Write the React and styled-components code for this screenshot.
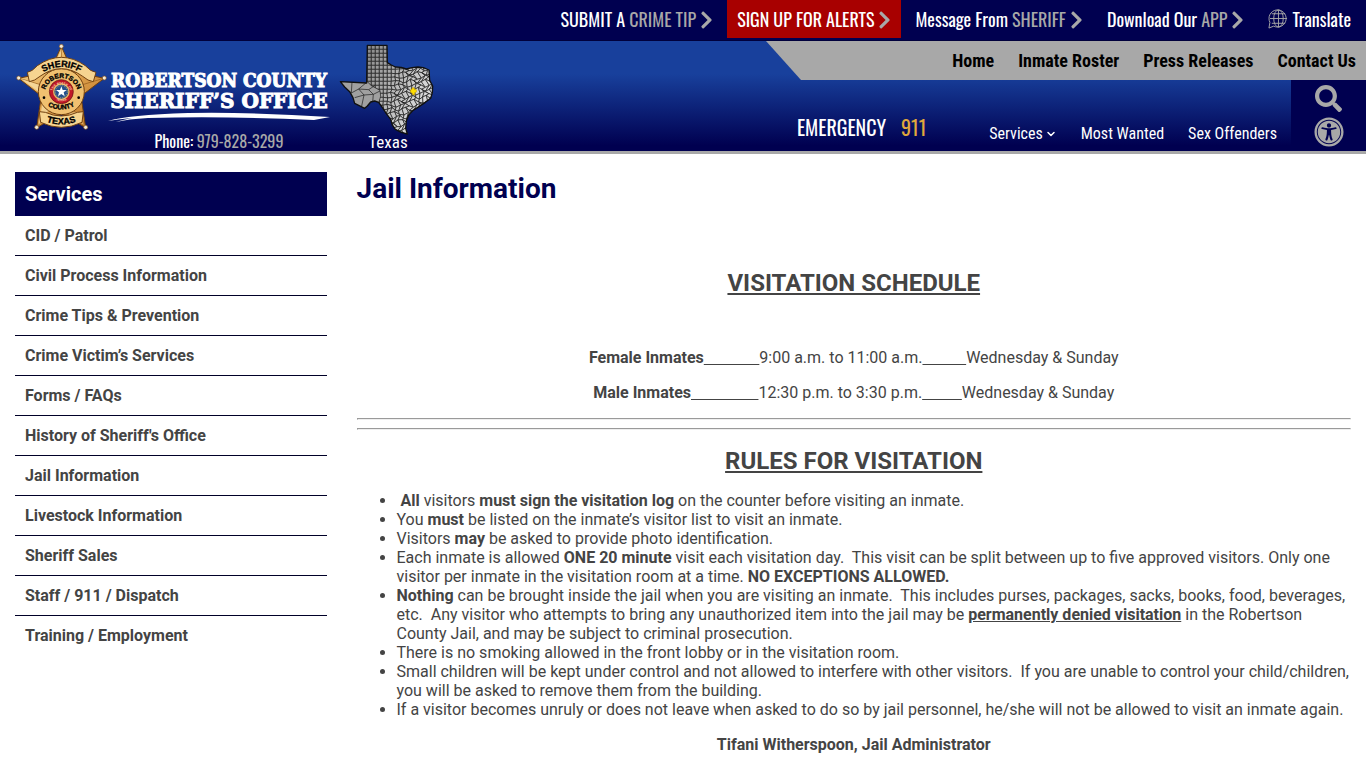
import React from "react";
import styled, { createGlobalStyle } from "styled-components";
import { FaChevronRight, FaSearch, FaUniversalAccess } from "react-icons/fa";
import { ChevronDown } from "lucide-react";

const NAVY = "#000050";
const SILVER = "#a8a8a8";
const INK = "#444";

const GlobalStyle = createGlobalStyle`
  *, *::before, *::after { box-sizing: border-box; }
  body {
    margin: 0;
    background: #fff;
    color: ${INK};
    font: 16px/19px Roboto, "Liberation Sans", sans-serif;
  }
  a { color: inherit; text-decoration: none; }
`;

/* ---------- top bar ---------- */

const TopBar = styled.div`
  display: flex;
  flex-wrap: wrap;
  justify-content: flex-end;
  align-items: flex-start;
  min-height: 41px;
  padding-right: 5px;
  background: ${NAVY};
  border-bottom: 1px solid #00003c;
`;

const TopLink = styled.a`
  display: flex;
  align-items: center;
  height: 38px;
  margin-left: 4px;
  padding: 0 10px;
  background: ${(p) => (p.$alert ? "#a80000" : "transparent")};
  color: #fff;
  font: 400 18px/24px Oswald, "Roboto Condensed", sans-serif;
  white-space: pre;

  span { color: ${SILVER}; }
  svg { color: ${SILVER}; }
`;

const Arrow = styled(FaChevronRight)`
  width: 13px;
  height: 20px;
  margin: 2px 0 0 4px;
`;

const Globe = styled.svg`
  width: 20px;
  height: 20px;
  margin-right: 4px;
  fill: none;
  stroke: currentColor;
`;

/* ---------- header ---------- */

const Header = styled.header`
  display: flex;
  min-height: 113px;
  border-bottom: 3px solid ${SILVER};
  background: linear-gradient(#18409c 0%, #18409c 30%, ${NAVY} 95%);
  color: #fff;
`;

const Brand = styled.div`
  display: flex;
  padding-left: 14px;
`;

const BadgeArt = styled.svg`
  width: 94px;
  height: 92px;
`;

const BrandText = styled.div`
  display: flex;
  flex-direction: column;
  align-items: center;
  width: 222px;
  padding-top: 29px;
`;

const BrandName = styled.a`
  font: 700 19px/21px "DejaVu Serif Condensed", "DejaVu Serif", serif;
  text-align: center;
  white-space: nowrap;
  -webkit-text-stroke: 1px #fff;

  span { display: block; }
  span + span { font-family: "DejaVu Serif", serif; font-size: 20px; }
`;

const Swoosh = styled.svg`
  width: 222px;
  height: 10px;
  margin-bottom: 9px;
`;

const Phone = styled.a`
  font: 400 16px/20px Oswald, "Roboto Condensed", sans-serif;

  span { color: ${SILVER}; }
`;

const StateMap = styled.figure`
  display: flex;
  flex-direction: column;
  align-items: center;
  margin: 0 0 0 8px;

  svg { width: 100px; height: 95px; display: block; }
  figcaption {
    margin-top: -2px;
    font: 400 17px/17px "Roboto Condensed", Roboto, sans-serif;
  }
`;

const HeaderNav = styled.div`
  flex: 1;
  display: flex;
  flex-direction: column;
  align-items: flex-end;
`;

const QuickNav = styled.nav`
  display: flex;
  justify-content: flex-end;
  align-items: center;
  gap: 24px;
  width: 600px;
  height: 39px;
  padding-right: 10px;
  background: ${SILVER};
  clip-path: polygon(0 0, 100% 0, 100% 100%, 35px 100%);
  color: #000;
  font: 700 18px/24px "Roboto Condensed", Roboto, sans-serif;
`;

const LowerRow = styled.div`
  flex: 1;
  display: flex;
  align-items: stretch;
`;

const Emergency = styled.p`
  display: flex;
  align-items: flex-end;
  gap: 15px;
  margin: 0 63px 9px 0;
  font: 400 20px/30px Oswald, "Roboto Condensed", sans-serif;

  a { color: #e0a83c; }
`;

const MainNav = styled.nav`
  display: flex;
  align-items: flex-end;
  gap: 24px;
  padding: 0 14px 5px 0;
  font: 400 16px/24px "Roboto Condensed", Roboto, sans-serif;

  a { display: flex; align-items: center; gap: 2px; }
  svg { width: 12px; height: 12px; }
`;

const Tools = styled.div`
  display: flex;
  flex-direction: column;
  align-items: center;
  gap: 5px;
  width: 75px;
  padding-top: 5px;
  background: ${NAVY};
`;

const ToolButton = styled.button`
  display: flex;
  padding: 0;
  border: 0;
  background: none;
  color: ${SILVER};
  cursor: pointer;

  svg { width: ${(p) => p.$size}px; height: ${(p) => p.$size}px; }
`;

/* ---------- page body ---------- */

const Page = styled.div`
  display: grid;
  grid-template-columns: 1fr 3fr;
  padding-top: 18px;
`;

const Sidebar = styled.aside`
  padding: 0 15px;
`;

const SidebarTitle = styled.h2`
  margin: 0;
  padding: 10px;
  background: ${NAVY};
  color: #fff;
  font-size: 20px;
  line-height: 24px;
  font-weight: 700;
`;

const SideList = styled.ul`
  margin: 0;
  padding: 0;
  list-style: none;
`;

const SideItem = styled.li`
  border-bottom: 1px solid #000028;
  &:last-child { border-bottom: 0; }

  a {
    display: block;
    padding: 10px;
    font-weight: 700;
  }
`;

const Content = styled.main`
  padding: 0 15px;
`;

const PageTitle = styled.h1`
  margin: 0 0 64px;
  color: ${NAVY};
  font-size: 28px;
  line-height: 33px;
  font-weight: 700;
`;

const SectionTitle = styled.h2`
  margin: 17px 0 ${(p) => p.$after}px;
  font-size: 24px;
  line-height: 28px;
  font-weight: 700;
  text-align: center;
  text-decoration: underline;
`;

const Line = styled.p`
  margin: 0 0 16px;
  text-align: center;
`;

const Gap = styled.u`
  white-space: pre;
`;

const Rule = styled.hr`
  margin: 0 0 8px;
`;

const Rules = styled.ul`
  margin: 0 0 16px;
  padding-left: 40px;
`;

/* ---------- drawings ---------- */

function Badge() {
  return (
    <BadgeArt viewBox="0 0 282 276" role="img" aria-label="Sheriff badge">
      <defs>
        <linearGradient id="gold" x1="0" y1="0" x2="1" y2="1">
          <stop offset="0" stopColor="#f8d890" />
          <stop offset="0.5" stopColor="#e0a450" />
          <stop offset="1" stopColor="#b87020" />
        </linearGradient>
        <path id="arcTop" d="M72 104 Q142 52 214 104" />
        <path id="arcName" d="M91 162 A51 51 0 1 1 193 162" />
        <path id="arcCounty" d="M80 176 A80 80 0 0 0 204 176" />
        <path id="arcTexas" d="M86 238 Q142 262 198 238" />
        <path id="arcSealTop" d="M114 158 A28 28 0 1 1 170 158" />
        <path id="arcSealLow" d="M110 160 A35 35 0 0 0 174 160" />
      </defs>
      <path
        d="M142 16 L176 92 L271 112 L201 165 L215 260 L142 218 L68 260 L82 165 L14 112 L108 92 Z"
        fill="url(#gold)"
        stroke="#704010"
        strokeWidth="3"
        strokeLinejoin="round"
      />
      <path
        d="M142 20 V218 M16 112 L142 150 L269 112 M70 258 L142 150 L213 258"
        stroke="#905818"
        strokeWidth="2"
        fill="none"
      />
      <path d="M142 26 L136 96 L110 96 Z M22 114 L84 134 L84 160 Z M74 252 L88 170 L110 200 Z M210 252 L186 214 L160 216 Z" fill="#fbe4ac" opacity="0.7" />
      {[[142, 16], [14, 111], [271, 111], [68, 259], [215, 259]].map(([x, y]) => (
        <circle key={x} cx={x} cy={y} r="6" fill="#f4ecd8" stroke="#805020" strokeWidth="2" />
      ))}
      <circle cx="142" cy="152" r="69" fill="#f0c070" stroke="#704010" strokeWidth="3" />
      <path
        d="M40 94 Q54 92 70 74 Q142 24 214 74 Q230 92 246 94 L238 122 Q222 120 206 106 Q142 60 78 106 Q62 120 46 122 Z"
        fill="#f6d490"
        stroke="#704010"
        strokeWidth="3"
        strokeLinejoin="round"
      />
      <path
        d="M76 212 L94 214 Q142 236 190 214 L208 212 L204 244 Q142 274 80 244 Z"
        fill="#f6d490"
        stroke="#704010"
        strokeWidth="3"
        strokeLinejoin="round"
      />
      <circle cx="142" cy="152" r="36" fill="#c01828" stroke="#601010" strokeWidth="2" />
      <circle cx="142" cy="152" r="23" fill="#24508c" stroke="#e8b860" strokeWidth="4" />
      <circle cx="142" cy="152" r="18" fill="none" stroke="#c8b070" strokeWidth="2" strokeDasharray="4 3" />
      <path d="M142 136 L146 147 L158 147 L149 154 L152 166 L142 159 L132 166 L135 154 L126 147 L138 147 Z" fill="#fff" />
      <circle cx="90" cy="170" r="4" fill="#000" />
      <circle cx="194" cy="170" r="4" fill="#000" />
      <g fontFamily="Liberation Sans, sans-serif" fontWeight="700" fill="#000" stroke="#000" textAnchor="middle">
        <text fontSize="27"><textPath href="#arcTop" startOffset="50%">SHERIFF</textPath></text>
        <text fontSize="20"><textPath href="#arcName" startOffset="50%">ROBERTSON</textPath></text>
        <text fontSize="20"><textPath href="#arcCounty" startOffset="50%">COUNTY</textPath></text>
        <text fontSize="27"><textPath href="#arcTexas" startOffset="50%">TEXAS</textPath></text>
        <text fontSize="10" fill="#f4c8a0" stroke="none"><textPath href="#arcSealTop" startOffset="50%">THE STATE OF</textPath></text>
        <text fontSize="10" fill="#f4c8a0" stroke="none"><textPath href="#arcSealLow" startOffset="50%">TEXAS</textPath></text>
      </g>
    </BadgeArt>
  );
}

const STATE =
  "M88 13 L147 13 L148 65 L160 72 L172 78 L190 79 L205 84 L222 80 L240 78 L256 80 L273 87 L275 118 L284 135 L283 155 L278 172 L262 184 L243 197 L225 208 L212 222 L205 240 L203 262 L208 279 L190 274 L172 265 L163 252 L158 235 L145 218 L132 198 L122 184 L110 180 L98 183 L88 195 L80 202 L68 196 L50 187 L45 170 L35 152 L20 138 L7 122 L86 126 Z";

/* County mesh: a square grid in the west that turns irregular towards the east. */
const STEP = 12;
const corner = (c, r) => {
  const x = 88 + c * STEP;
  const y = 13 + r * STEP;
  const wobble = Math.max(0, Math.min(6, (x + y * 0.4 - 205) / 7));
  return [
    Math.round(x + Math.sin(c * 12.9 + r * 78.2) * wobble),
    Math.round(y + Math.sin(c * 39.3 + r * 11.1) * wobble),
  ];
};
const counties = [];
for (let r = 0; r < 23; r += 1) {
  for (let c = 0; c < 17; c += 1) {
    const pts = [corner(c, r), corner(c + 1, r), corner(c + 1, r + 1), corner(c, r + 1)];
    const tone = Math.min(225, 138 + c * 4 + r * 2);
    counties.push({ id: `${c}-${r}`, d: `M${pts.map((p) => p.join(" ")).join("L")}Z`, fill: `rgb(${tone},${tone},${tone})` });
  }
}

function TexasMap() {
  return (
    <svg viewBox="0 0 300 285" role="img" aria-label="Map of Texas counties">
      <clipPath id="state"><path d={STATE} /></clipPath>
      <g clipPath="url(#state)" stroke="#181818" strokeWidth="2">
        <path d={STATE} fill="#a0a0a0" />
        {counties.map((k) => <path key={k.id} d={k.d} fill={k.fill} />)}
        <path d="M0 110 L86 120 L100 134 L126 148 L128 166 L118 200 L40 210 Z" fill="#a0a0a0" />
        <path d="M42 122 L40 156 M40 156 L62 144 L86 124 M62 144 L78 162 L50 170 M78 162 L70 200 M62 144 L92 146 L110 134 M92 146 L106 160 L78 162 M106 160 L104 184 M106 160 L126 150" fill="none" />
      </g>
      <path d={STATE} fill="none" stroke="#101010" strokeWidth="4" strokeLinejoin="round" />
      <path d="M218 146 L222 145 L223 140 L229 141 L229 145 L235 146 L235 153 L230 155 L230 161 L224 161 L223 156 L218 154 Z" fill="#ffe000" stroke="#d0a800" strokeWidth="2" />
    </svg>
  );
}

const serviceLinks = [
  "CID / Patrol",
  "Civil Process Information",
  "Crime Tips & Prevention",
  "Crime Victim’s Services",
  "Forms / FAQs",
  "History of Sheriff's Office",
  "Jail Information",
  "Livestock Information",
  "Sheriff Sales",
  "Staff / 911 / Dispatch",
  "Training / Employment",
];

const blank = (n) => "\u00a0".repeat(n);

export default function App() {
  return (
    <>
      <GlobalStyle />
      <TopBar>
        <TopLink href="#tip">SUBMIT A <span>CRIME TIP</span><Arrow /></TopLink>
        <TopLink href="#alerts" $alert>SIGN UP FOR ALERTS<Arrow /></TopLink>
        <TopLink href="#message">Message From <span>SHERIFF</span><Arrow /></TopLink>
        <TopLink href="#app">Download Our <span>APP</span><Arrow /></TopLink>
        <TopLink href="#translate">
          <Globe viewBox="0 0 21 21" aria-hidden="true">
            <path d="M1 20 L2 14 A9 9 0 1 1 6 18 Z M11 1 V19 M2 10 H20 M4 5 H18 M4 15 H18" />
            <ellipse cx="11" cy="10" rx="5" ry="9" />
          </Globe>
          Translate
        </TopLink>
      </TopBar>

      <Header>
        <Brand>
          <Badge />
          <BrandText>
            <BrandName href="#home"><span>ROBERTSON COUNTY</span><span>SHERIFF’S OFFICE</span></BrandName>
            <Swoosh viewBox="0 0 222 10" aria-hidden="true">
              <path d="M0 9 Q20 3 80 1 Q150 0 222 5 L206 8 Q120 4 40 6 Q20 7 8 10 Q14 8 24 6 Q12 7 0 9 Z" fill="#fff" />
            </Swoosh>
            <Phone href="tel:9798283299">Phone: <span>979-828-3299</span></Phone>
          </BrandText>
        </Brand>
        <StateMap>
          <TexasMap />
          <figcaption>Texas</figcaption>
        </StateMap>
        <HeaderNav>
          <QuickNav aria-label="Quick links">
            <a href="#home">Home</a>
            <a href="#roster">Inmate Roster</a>
            <a href="#press">Press Releases</a>
            <a href="#contact">Contact Us</a>
          </QuickNav>
          <LowerRow>
            <Emergency>EMERGENCY <a href="tel:911">911</a></Emergency>
            <MainNav aria-label="Main">
              <a href="#services">Services <ChevronDown strokeWidth={3} /></a>
              <a href="#wanted">Most Wanted</a>
              <a href="#offenders">Sex Offenders</a>
            </MainNav>
            <Tools>
              <ToolButton $size={27} aria-label="Search"><FaSearch /></ToolButton>
              <ToolButton $size={30} aria-label="Accessibility"><FaUniversalAccess /></ToolButton>
            </Tools>
          </LowerRow>
        </HeaderNav>
      </Header>

      <Page>
        <Sidebar>
          <SidebarTitle>Services</SidebarTitle>
          <SideList>
            {serviceLinks.map((label) => (
              <SideItem key={label}><a href="#service">{label}</a></SideItem>
            ))}
          </SideList>
        </Sidebar>
        <Content>
          <PageTitle>Jail Information</PageTitle>
          <SectionTitle $after={51}>VISITATION SCHEDULE</SectionTitle>
          <Line><b>Female Inmates</b><Gap>{blank(14)}</Gap>9:00 a.m. to 11:00 a.m.<Gap>{blank(11)}</Gap>Wednesday &amp; Sunday</Line>
          <Line><b>Male Inmates</b><Gap>{blank(17)}</Gap>12:30 p.m. to 3:30 p.m.<Gap>{blank(10)}</Gap>Wednesday &amp; Sunday</Line>
          <Rule />
          <Rule />
          <SectionTitle $after={16}>RULES FOR VISITATION</SectionTitle>
          <Rules>
            <li>&nbsp;<b>All</b> visitors <b>must sign the visitation log</b> on the counter before visiting an inmate.</li>
            <li>You <b>must</b> be listed on the inmate’s visitor list to visit an inmate.</li>
            <li>Visitors <b>may</b> be asked to provide photo identification.</li>
            <li>Each inmate is allowed <b>ONE 20 minute</b> visit each visitation day.&nbsp; This visit can be split between up to five approved visitors. Only one visitor per inmate in the visitation room at a time. <b>NO EXCEPTIONS ALLOWED.</b></li>
            <li><b>Nothing</b> can be brought inside the jail when you are visiting an inmate.&nbsp; This includes purses, packages, sacks, books, food, beverages, etc.&nbsp; Any visitor who attempts to bring any unauthorized item into the jail may be <b><u>permanently denied visitation</u></b> in the Robertson County Jail, and may be subject to criminal prosecution.</li>
            <li>There is no smoking allowed in the front lobby or in the visitation room.</li>
            <li>Small children will be kept under control and not allowed to interfere with other visitors.&nbsp; If you are unable to control your child/children, you will be asked to remove them from the building.</li>
            <li>If a visitor becomes unruly or does not leave when asked to do so by jail personnel, he/she will not be allowed to visit an inmate again.</li>
          </Rules>
          <Line><b>Tifani Witherspoon, Jail Administrator</b></Line>
        </Content>
      </Page>
    </>
  );
}
